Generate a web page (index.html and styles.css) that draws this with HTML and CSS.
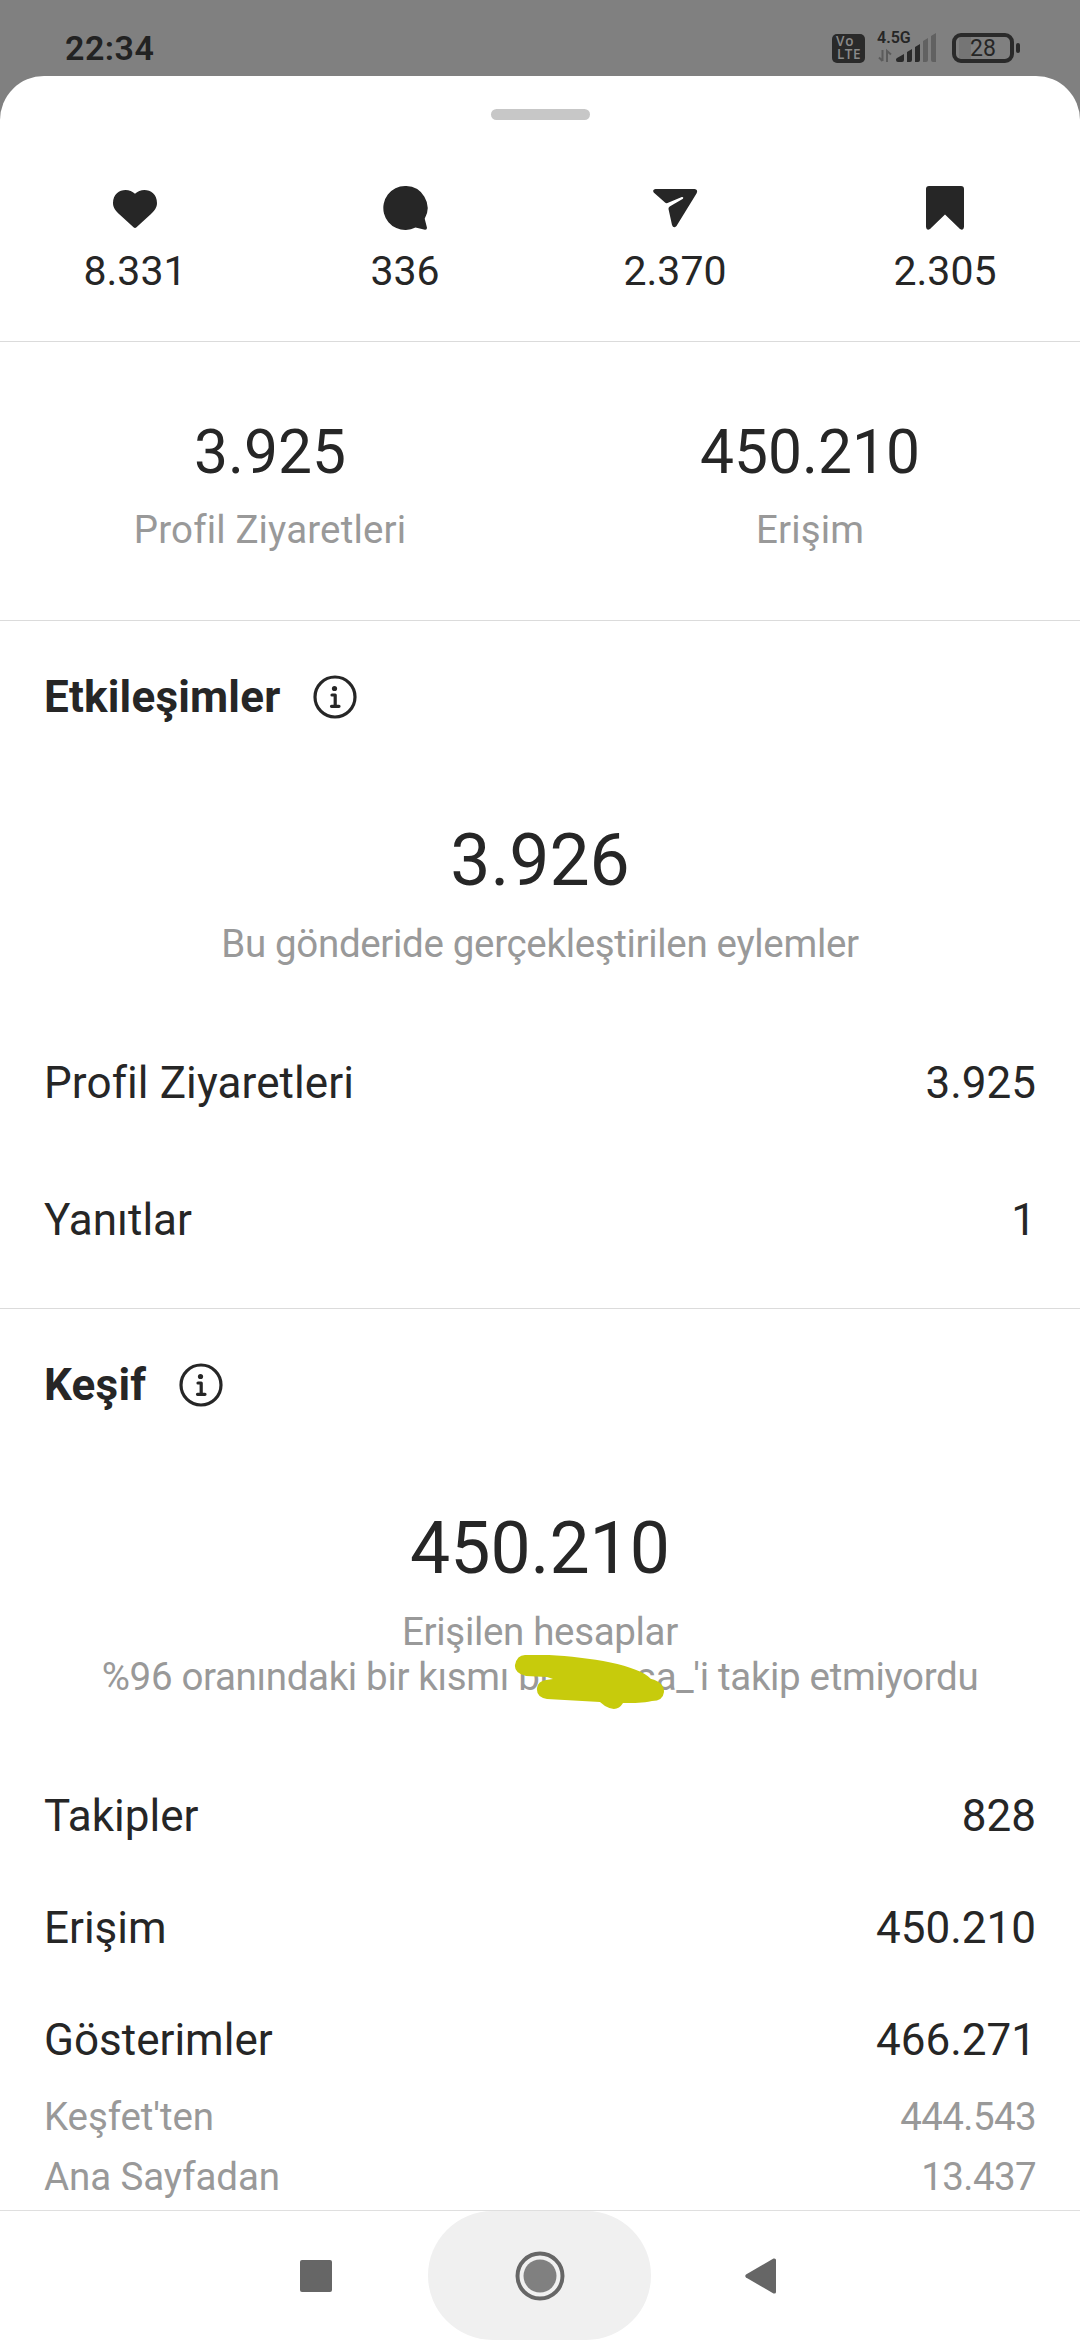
FILE: index.html
```
<!DOCTYPE html>
<html lang="tr">
<head>
<meta charset="utf-8">
<title>İstatistikler</title>
<link rel="stylesheet" href="styles.css">
</head>
<body>
<div class="screen">
  <header class="status">
    <span class="time">22:34</span>
    <div class="tray">
      <span class="volte"><span class="vo">Vo</span><span class="lte">LTE</span></span>
      <span class="network">
        <span class="net-type">4.5G</span>
        <svg class="signal" width="60" height="32" viewBox="0 0 60 32">
          <path d="M6.500 17v11M3 24.500l3.500 3.500M11 29V18l4 3.500" fill="none" stroke="#5b5b5b" stroke-width="2"/>
          <path fill="#2a2a2a" d="M20 26.500q0-1 1-1.500l7-4v6q0 2-2 2h-4q-2 0-2-2zM31 19l5-3v11q0 2-2 2h-3zM39 14l5-3v16q0 2-2 2h-3z"/>
          <path fill="#616161" d="M47 8l5-3v22q0 2-2 2h-3zM55 3l5-3v29h-3q-2 0-2-2z"/>
        </svg>
      </span>
      <span class="battery"><span class="level">28</span></span>
    </div>
  </header>
  <main class="sheet">
    <div class="handle"></div>
    <section class="stats">
      <div class="stat">
        <svg width="48" height="48" viewBox="0 0 48 48" fill="#262626"><path d="M24 7.800C31 .500 46 3.500 46 17c0 4.500-2.500 7.800-6 11L25.500 41.300q-1.500 1.200-3 0L8 28c-3.500-3.200-6-6.500-6-11C2 3.500 17 .500 24 7.800z"/></svg>
        <span>8.331</span>
      </div>
      <div class="stat">
        <svg width="48" height="48" viewBox="0 0 48 48" fill="#262626"><path d="M24 0a22 22 0 1 0 10.500 41.500l9.500 2.300q2 .200 2-2l-2.300-9A22 22 0 0 0 24 0z"/></svg>
        <span>336</span>
      </div>
      <div class="stat">
        <svg width="48" height="48" viewBox="0 0 48 48" fill="#262626"><path d="M4.500 3h39q4 .500 2 4.500L25.500 40q-3 3-4.500-1l-3.500-16q-.300-1.500 1.200-2.500L32 12.700q1-2-1.200-1.700L16.500 17q-1.500 .500-2.500-.500L2.700 6.500Q1 3.500 4.500 3z"/></svg>
        <span>2.370</span>
      </div>
      <div class="stat">
        <svg width="48" height="48" viewBox="0 0 48 48" fill="#262626"><path d="M8 0h32q3 0 3 3v38q-.500 4-4 2L24 28.500 9 43q-3.500 2-4-2V3q0-3 3-3z"/></svg>
        <span>2.305</span>
      </div>
    </section>
    <section class="summary">
      <div class="figure"><strong>3.925</strong><span>Profil Ziyaretleri</span></div>
      <div class="figure"><strong>450.210</strong><span>Erişim</span></div>
    </section>
    <section class="section interactions">
      <h2>Etkileşimler <svg class="info" width="44" height="44" viewBox="0 0 44 44"><circle cx="22" cy="22" r="20" fill="none" stroke="#262626" stroke-width="3.200"/><circle cx="21.500" cy="13.500" r="2.600" fill="#262626"/><path d="M19 20h3.200v11M18.500 31.300h7.500" fill="none" stroke="#262626" stroke-width="3.200" stroke-linecap="round" stroke-linejoin="round"/></svg></h2>
      <div class="total"><strong>3.926</strong><p>Bu gönderide gerçekleştirilen eylemler</p></div>
      <div class="row"><span class="wide">Profil Ziyaretleri</span><span>3.925</span></div>
      <div class="row"><span>Yanıtlar</span><span>1</span></div>
    </section>
    <section class="section discovery">
      <h2>Keşif <svg class="info" width="44" height="44" viewBox="0 0 44 44"><circle cx="22" cy="22" r="20" fill="none" stroke="#262626" stroke-width="3.200"/><circle cx="21.500" cy="13.500" r="2.600" fill="#262626"/><path d="M19 20h3.200v11M18.500 31.300h7.500" fill="none" stroke="#262626" stroke-width="3.200" stroke-linecap="round" stroke-linejoin="round"/></svg></h2>
      <div class="total"><strong>450.210</strong><p>Erişilen hesaplar</p>
        <p class="masked"><span>%96 oranındaki bir kısmı br</span><span class="gap"></span><span>sa_'i takip etmiyordu</span>
          <svg class="scribble" width="152" height="56" viewBox="0 0 152 56" fill="#c7cb0c"><path d="M11 0H35C75 2 125 10 137 24Q150 27 150 37Q149 46 138 46C128 48 122 48 109 48Q103 58 91 51L86 47 33 44Q22 42 23 33Q24 26 32 25L39 24 33 22 12 21Q0 18 1 10Q3 0 11 0z"/></svg>
        </p></div>
      <div class="row"><span>Takipler</span><span>828</span></div>
      <div class="row"><span>Erişim</span><span>450.210</span></div>
      <div class="row"><span>Gösterimler</span><span>466.271</span></div>
      <div class="breakdown">
        <div class="subrow"><span>Keşfet'ten</span><span class="count">444.543</span></div>
        <div class="subrow"><span>Ana Sayfadan</span><span class="count">13.437</span></div>
      </div>
    </section>
  </main>
  <nav class="navbar">
    <svg width="32" height="32" viewBox="0 0 32 32"><rect width="32" height="32" rx="2" fill="#666"/></svg>
    <span class="home"><svg width="50" height="50" viewBox="0 0 50 50"><circle cx="25" cy="25" r="22.500" fill="none" stroke="#666" stroke-width="4"/><circle cx="25" cy="25" r="16.500" fill="#808080"/></svg></span>
    <svg width="32" height="36" viewBox="0 0 32 36"><path d="M1 16.500L28.500 .500Q31 0 31 2v32q0 2-2.500 1.500L1 19.500q-1.500-1.500 0-3z" fill="#666"/></svg>
  </nav>
</div>
</body>
</html>
```
FILE: styles.css
```
* { box-sizing: border-box; }
body { margin: 0; font-family: Roboto, sans-serif; color: #262626; background: #808080; }
p, h2 { margin: 0; }
strong { font-weight: 400; }
.screen { width: 1080px; height: 2340px; display: flex; flex-direction: column; overflow: hidden; }

/* Status bar */
.status { height: 76px; flex: none; display: flex; justify-content: space-between; padding: 28px 59px 0 65px; }
.time { font-size: 34px; line-height: 40px; font-weight: 600; letter-spacing: .5px; color: #222; }
.tray { display: flex; align-items: flex-start; }
.volte { width: 33px; height: 29px; margin-top: 6px; background: #2a2a2a; border-radius: 5px; color: #8a8a8a; font: 600 13.5px/13px "Open Sans", sans-serif; display: flex; flex-direction: column; padding: 1px 0 0 4px; }
.vo { letter-spacing: .8px; }
.lte { padding-left: 1px; letter-spacing: .5px; }
.network { width: 60px; height: 34px; margin: 2px 14px 0 11px; position: relative; }
.net-type { position: absolute; left: 1px; top: -1px; font-size: 16px; line-height: 17px; font-weight: 600; }
.signal { position: absolute; left: 0; top: 3px; }
.battery { width: 62px; height: 30px; margin: 5px 7px 0 2px; border: 4px solid #2a2a2a; border-radius: 9px; position: relative; text-align: center; background: linear-gradient(90deg, transparent 3px, #757575 3px 15px, transparent 15px); }
.battery::after { content: ""; position: absolute; right: -10px; top: 6px; width: 4px; height: 10px; border-radius: 2px; background: #2a2a2a; }
.level { font-size: 23px; line-height: 23px; font-weight: 400; display: block; }

/* Bottom sheet */
.sheet { height: 2134px; flex: none; background: #fff; border-radius: 44px 44px 0 0; overflow: hidden; }
.handle { width: 99px; height: 11px; margin: 33px auto 0; border-radius: 6px; background: #c7c7c7; }
.stats { height: 222px; padding-top: 66px; display: grid; grid-template-columns: repeat(4, 1fr); border-bottom: 1px solid #dbdbdb; }
.stat { display: flex; flex-direction: column; align-items: center; font-size: 41px; line-height: 48px; }
.stat span { margin-top: 13px; }
.summary { height: 279px; padding-top: 75px; display: grid; grid-template-columns: 1fr 1fr; border-bottom: 1px solid #dbdbdb; }
.figure { display: flex; flex-direction: column; align-items: center; }
.figure strong { font-size: 60.5px; line-height: 72px; }
.figure span, .total p, .subrow { font-size: 38.5px; color: #999; }
.figure span { line-height: 45px; margin-top: 18px; letter-spacing: .14px; }
.section { padding: 50px 44px 0; }
.interactions { height: 688px; border-bottom: 1px solid #dbdbdb; }
h2 { height: 52px; font-size: 44px; line-height: 52px; font-weight: 700; letter-spacing: .2px; display: flex; align-items: center; gap: 33px; }
.total { margin-top: 96px; text-align: center; }
.total strong { display: block; font-size: 71.5px; line-height: 84px; }
.total p { line-height: 45px; letter-spacing: -.33px; }
.total strong + p { margin-top: 18px; }
.total .masked { position: relative; display: flex; justify-content: center; }
.gap { width: 84px; }
.scribble { position: absolute; left: 470px; top: 1px; }
.row, .subrow { display: flex; justify-content: space-between; }
.row { font-size: 44px; line-height: 52px; }
.wide { letter-spacing: .1px; }
.interactions .total { height: 153px; }
.interactions .row { margin-top: 85px; }
.discovery .total { height: 223px; }
.discovery .row { margin-top: 60px; }
.breakdown { display: grid; gap: 15px; margin-top: 28px; }
.subrow { line-height: 45px; letter-spacing: -.1px; }
.count { letter-spacing: -.6px; }

/* System navigation */
.navbar { height: 130px; flex: none; background: #fff; border-top: 1px solid #dfdfdf; display: grid; grid-template-columns: 428px 223px 429px; align-items: center; }
.navbar > svg:first-child { margin-left: 300px; }
.navbar > svg:last-child { margin-left: 94px; }
.home { height: 129px; border-radius: 65px; background: #f0f0f0; display: flex; align-items: center; justify-content: center; }
```
